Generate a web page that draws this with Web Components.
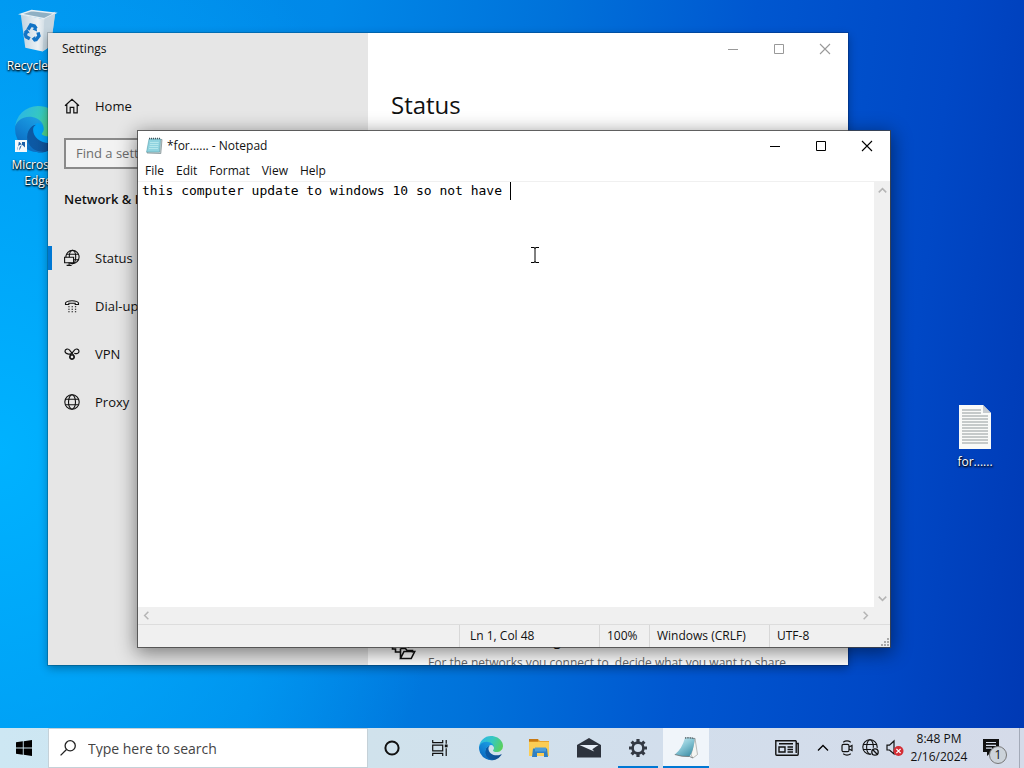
<!DOCTYPE html>
<html lang="en">
<head>
<meta charset="utf-8">
<title>Desktop</title>
<style>
  html, body{ margin:0; height:100%; overflow:hidden }
  body{
    --accent:#0078d4;
    font:12px/16px "Open Sans","Noto Sans",sans-serif;
    color:#111;
  }
</style>
</head>
<body>
<win-desktop></win-desktop>

<script>
const ICONS = {
  home: `<svg viewBox="0 0 16 16" fill="none" stroke="currentColor" stroke-width="1.2"><path d="M1 7.8 8 1.2l7 6.6M2.8 6.4v8.4h3.4V9.3h3.6v5.5h3.4V6.4"/></svg>`,
  status: `<svg viewBox="0 0 16 16" fill="none" stroke="currentColor" stroke-width="1.1"><circle cx="8.500" cy="7" r="6.600"/><ellipse cx="8.500" cy="7" rx="3.200" ry="6.600"/><path d="M2.600 4.300h11.800M2.600 9.700h11.800"/><path d="M.6 7.300h9v5.400h-9z" fill="#e6e6e6"/><path d="M5.100 12.700v2.500M2.600 15.400h5"/></svg>`,
  dialup: `<svg viewBox="0 0 16 16" fill="none" stroke="currentColor" stroke-width="1.1"><path d="M1.500 6.500V5C3 2 13 2 14.500 5v1.500h-3.300V5.200H4.800v1.300z"/><path stroke-dasharray="1.300 2" d="M4.300 8.700h8M4.300 11.200h8M4.300 13.700h8"/></svg>`,
  vpn: `<svg viewBox="0 0 16 16" fill="none" stroke="currentColor" stroke-width="1.200"><path d="M8 7.200C6 9 1 7.800 1 5.200 1 2.800 4.300 2.200 5.800 4.300l4 5.200c1.200 2-.2 3.600-1.800 3.600s-3-1.600-1.800-3.600l4-5.200C11.700 2.200 15 2.800 15 5.200S12.200 8.200 10.300 7.200"/><circle cx="8" cy="11" r="2.100"/></svg>`,
  globe: `<svg viewBox="0 0 16 16" fill="none" stroke="currentColor" stroke-width="1.100"><circle cx="8" cy="8" r="7.200"/><ellipse cx="8" cy="8" rx="3.500" ry="7.200"/><path d="M1.500 5.300h13M1.500 10.700h13"/></svg>`,
  sharing: `<svg viewBox="0 0 24 22" fill="none" stroke="currentColor" stroke-width="1.600"><path d="M1 2v9h3v3h5M6 4h11v6M9 10.500h5l1.500 2H21v2"/><path d="M9 20.500V10.500M9 20.500l3.500-7H23.200l-3.500 7z"/></svg>`,
  minimize: `<svg viewBox="0 0 10 10"><path d="M0 5.500h10" stroke="currentColor"/></svg>`,
  maximize: `<svg viewBox="0 0 10 10"><path d="M.5.5h9v9h-9z" fill="none" stroke="currentColor"/></svg>`,
  close: `<svg viewBox="0 0 10 10"><path d="m0 0 10 10M10 0 0 10" stroke="currentColor" stroke-width="1.100"/></svg>`,
  up: `<svg viewBox="0 0 12 12"><path d="m1 8.500 5-5 5 5" fill="none" stroke="currentColor" stroke-width="var(--stroke,1.300)"/></svg>`,
  down: `<svg viewBox="0 0 12 12"><path d="m1 3.500 5 5 5-5" fill="none" stroke="currentColor" stroke-width="var(--stroke,1.300)"/></svg>`,
  left: `<svg viewBox="0 0 12 12"><path d="m8.500 1-5 5 5 5" fill="none" stroke="currentColor" stroke-width="var(--stroke,1.300)"/></svg>`,
  right: `<svg viewBox="0 0 12 12"><path d="m3.500 1 5 5-5 5" fill="none" stroke="currentColor" stroke-width="var(--stroke,1.300)"/></svg>`,
  start: `<svg viewBox="0 0 16 16" fill="#000"><path d="M0 2.300 6.800 1.300v6.200H0zM7.700 1.200 16 0v7.500H7.700zM0 8.400h6.800v6.300L0 13.700zM7.700 8.400H16V16l-8.300-1.200z"/></svg>`,
  search: `<svg viewBox="0 0 16 16" fill="none" stroke="#222" stroke-width="1.300"><circle cx="10.200" cy="5.800" r="5.100"/><path d="M6.500 9.500.6 15.400"/></svg>`,
  cortana: `<svg viewBox="0 0 16 16"><circle cx="8" cy="8" r="6.600" fill="none" stroke="#111" stroke-width="2"/></svg>`,
  taskview: `<svg viewBox="0 0 16 16" fill="none" stroke="#111" stroke-width="1.200"><path d="M.7 0v2.600h10V0M.7 16v-2.600h10V16M.7 5.200h10v5.600H.7zM14.200 0v3.800M14.200 8.200V16"/><path d="M12.800 4.500h2.800v2.800h-2.800z" fill="#111" stroke="none"/></svg>`,
  edge: `<svg viewBox="0 0 256 256">
    <defs>
      <linearGradient id="e1" x1=".2" x2="1" y1=".6" y2=".6"><stop stop-color="#0c59a4"/><stop offset="1" stop-color="#114a8b"/></linearGradient>
      <linearGradient id="e2" x1=".7" x2=".2" y1=".1" y2="1"><stop stop-color="#1b9de2"/><stop offset=".5" stop-color="#1181d2"/><stop offset="1" stop-color="#0a62b8"/></linearGradient>
      <linearGradient id="e3" x1="0" x2="1" y1=".3" y2=".6"><stop stop-color="#2bb5e8"/><stop offset=".5" stop-color="#36c8c0"/><stop offset="1" stop-color="#5bd05a"/></linearGradient>
    </defs>
    <path fill="url(#e1)" d="M235.680 195.460a93.730 93.730 0 0 1-10.540 4.710 101.870 101.870 0 0 1-35.900 6.460c-47.320 0-88.540-32.550-88.540-74.320a31.480 31.480 0 0 1 16.430-27.310c-42.800 1.800-53.800 46.400-53.800 72.530 0 73.880 68.090 81.370 82.760 81.370 7.910 0 19.840-2.300 27-4.560l1.310-.44a128.340 128.340 0 0 0 66.600-52.800 4 4 0 0 0-5.320-5.640z"/>
    <path fill="url(#e2)" d="M105.730 241.420a79.200 79.200 0 0 1-22.740-21.340 80.720 80.720 0 0 1 29.530-120c3.120-1.470 8.450-4.130 15.540-4a32.350 32.350 0 0 1 25.690 13 31.880 31.880 0 0 1 6.360 18.660c0-.21 24.460-79.600-80-79.600-43.900 0-80 41.660-80 78.210a130.150 130.150 0 0 0 12.110 56 128 128 0 0 0 156.380 67.110 75.550 75.550 0 0 1-62.780-8z"/>
    <path fill="url(#e3)" d="M152.330 148.860c-.81 1.050-3.300 2.500-3.300 5.660 0 2.610 1.700 5.120 4.720 7.230 14.380 10 41.490 8.680 41.560 8.680a59.560 59.560 0 0 0 30.270-8.350 61.380 61.380 0 0 0 30.430-52.880c.26-22.410-8-37.310-11.340-43.910C223.460 23.840 177.720 0 128 0A128 128 0 0 0 0 126.200c.48-36.540 36.800-66.050 80-66.050 3.500 0 23.460.34 42 10.070 16.340 8.580 24.900 18.940 30.850 29.210 6.180 10.670 7.280 24.150 7.280 29.520s-2.740 13.330-7.800 19.910z"/>
  </svg>`,
  explorer: `<svg viewBox="0 0 24 24"><path d="M1 3h9l2 2h9v15H1z" fill="#e8a52e"/><path d="M1 6h20v14H1z" fill="#fbcd55"/><path d="M1 3h9v2.500H1z" fill="#c77813"/><path d="M5 12.500h14l1 8.500h-4v-4H9v4H4z" fill="#2f80c3"/><path d="M7 11.500h11v4H7z" fill="#4b9dd8"/></svg>`,
  mail: `<svg viewBox="0 0 24 20"><path d="M0 7 12 0l12 7v12.500H0z" fill="#2d333d"/><path d="M2.500 7h19l-6.200 4.200 2 2.200-5.300-2.100z" fill="#e5edf6"/></svg>`,
  settings: `<svg viewBox="0 0 20 20" fill="none" stroke="#333943"><circle cx="10" cy="10" r="5.400" stroke-width="2.600"/><path stroke-width="3.200" d="M10 1v3.200M10 15.800V19M1 10h3.200M15.800 10H19M3.600 3.600l2.300 2.300M14.100 14.100l2.300 2.300M16.400 3.600l-2.300 2.300M5.900 14.100l-2.300 2.300"/></svg>`,
  notepad: `<svg viewBox="0 0 24 24"><defs><linearGradient id="n" x2=".7" y2="1"><stop stop-color="#d5f0f5"/><stop offset=".5" stop-color="#8cc9d8"/><stop offset="1" stop-color="#4393aa"/></linearGradient></defs><path d="m21 2.500 2.500 16-4.500 3.500-2-3z" fill="#f4f5f2" stroke="#8d8f8c" stroke-width=".6"/><path d="M11 1.800q5-.6 9.500.7Q20 14 15.500 20.500 8 21 .8 18.500 8 13 11 1.800z" fill="url(#n)"/><path d="M.8 18.500Q8 21 15.500 20.500L19 22" stroke="#6b6f70" stroke-width=".8" fill="none"/><path d="M11 2q5-.6 10 .7" stroke="#4c565a" stroke-width="1.400" stroke-dasharray="1 .7" fill="none"/></svg>`,
  notefile: `<svg viewBox="0 0 16 17"><path d="m4 2 12 .5-1.200 14L1 16z" fill="#cbd0cf" stroke="#73878d" stroke-width=".7"/><path d="M3 2h11.500l-1 13H.6z" fill="#8fd3df" stroke="#5fa6b4" stroke-width=".6"/><path d="M4 5.500h8.700M3.800 7.500h8.700M3.500 9.500h8.700M3 11.500h9" stroke="#c4eff2" stroke-width=".7"/><path d="M3 1.500h12" stroke="#3e565d" stroke-width="1.500" stroke-dasharray="1 1"/></svg>`,
  news: `<svg viewBox="0 0 24 16" fill="none" stroke="#111" stroke-width="1.400"><path d="M21.200.8H.8v13.500q0 .9.900.9h20.600q.9 0 .9-.9V3.500h-2v9.500M21.200.8V4"/><path d="M4 7h6v5H4zM4 3.800h14M12.500 7H18M12.500 9.500H18M12.500 12H18"/></svg>`,
  meet: `<svg viewBox="0 0 14 18" fill="none" stroke="#111" stroke-width="1.200"><rect x="2" y="5.300" width="7" height="7.400" rx="1.500"/><path d="m9 8 3-1.600v5.200L9 10M3.200 3.200Q7 .6 10.800 3.200M3.200 14.800Q7 17.400 10.800 14.800"/></svg>`,
  offline: `<svg viewBox="0 0 18 18" fill="none" stroke="#111" stroke-width="1.100"><circle cx="8" cy="8" r="7.200"/><ellipse cx="8" cy="8" rx="3.400" ry="7.200"/><path d="M1 5.500h14M1 10.500h14"/><circle cx="13" cy="13" r="4.600" fill="#d4dcea" stroke="none"/><circle cx="13" cy="13" r="3.200" stroke-width="1.300"/><path d="m10.800 10.800 4.400 4.400" stroke-width="1.300"/></svg>`,
  muted: `<svg viewBox="0 0 18 18"><path d="M1 6.200h2.500L8 2v13l-4.500-4H1z" fill="none" stroke="#111" stroke-width="1.200"/><circle cx="12.500" cy="12" r="5" fill="#d42d35"/><path d="m10.400 9.900 4.200 4.200M14.600 9.900l-4.200 4.200" stroke="#fff" stroke-width="1.300"/></svg>`,
  notice: `<svg viewBox="0 0 18 18"><path d="M1 0h16v13H9.500L5 17v-4H1z" fill="#111"/><path d="M4 3.500h10M4 6.300h10M4 9.100h6" stroke="#d4dcea" stroke-width="1.200"/></svg>`,
  recycle: `<svg viewBox="0 0 44 48"><defs><linearGradient id="r" x2="1"><stop stop-color="#bdd2e0"/><stop offset=".5" stop-color="#edf1f4"/><stop offset="1" stop-color="#a7bfce"/></linearGradient></defs><path d="m3 6 23 5 15-8-5 38-9 6L8 43z" fill="url(#r)"/><path d="M3 6 15 2l26 3-12 6z" fill="#8fb0c4" stroke="#e7eff4" stroke-width="1.500"/><path d="m29 11 12-6-5 36-9 6z" fill="#c5d4de"/><g fill="none" stroke="#1374c6" stroke-width="3.800"><path d="m11 23 3-5 4 1 2 3M22 26l1 4-3 4h-3M13 33l-4-2-1-3 2-3"/></g><path d="m20 19 1 6-5-2zM19 30v7l-4-4zM6 26l4-4 3 5z" fill="#1374c6"/></svg>`,
  textfile: `<svg viewBox="0 0 32 44"><path d="M0 0h24l8 8v36H0z" fill="#f9faf8"/><path d="M24 0v8h8z" fill="#c7ccd0"/><path d="M3 5h19M3 8h19M3 11h26M3 14h26M3 17h26M3 20h26M3 23h26M3 26h26M3 29h26M3 32h26M3 35h26M3 38h26" stroke="#929a9b"/></svg>`,
  shortcut: `<svg viewBox="0 0 12 12"><path d="M0 0h12v12H0z" fill="#f5f8fb"/><path d="M2.500 10.500C2 6.500 4 4.500 7 4.500V2H3.800M7 4.500 4.500 2H10v5.500L7.500 5C5 5.500 4 7.500 4.500 10.500z" fill="#1c5fa8"/></svg>`,
  ibeam: `<svg viewBox="0 0 8 16"><path d="M0 .5h3q1 0 1 1 0-1 1-1h3M4 1v14M0 15.500h3q1 0 1-1 0 1 1 1h3" fill="none" stroke="#000"/></svg>`,
  grip: `<svg viewBox="0 0 9 9" fill="#aaa"><path d="M6 0h2v2H6zM3 3h2v2H3zM6 3h2v2H6zM0 6h2v2H0zM3 6h2v2H3zM6 6h2v2H6z"/></svg>`
};

/** <win-icon name="..."> : sized by its user, coloured by currentColor */
class WinIcon extends HTMLElement{
  constructor(){
    super();
    this.attachShadow({mode:'open'});
  }
  connectedCallback(){
    this.setAttribute('aria-hidden', 'true');
    this.shadowRoot.innerHTML = `
      <style>
        :host{ display:block; flex:none; width:16px; height:16px }
        svg{ display:block; width:100%; height:100%; overflow:visible }
      </style>
      ${ICONS[this.getAttribute('name')] || ''}
    `;
  }
}
customElements.define('win-icon', WinIcon);

class DesktopIcon extends HTMLElement{
  constructor(){
    super();
    this.attachShadow({mode:'open'});
    this.shadowRoot.innerHTML = `
      <style>
        :host{ display:block; width:76px }
        a{
          display:flex; flex-direction:column; align-items:center; gap:5px;
          color:#fff; text-align:center; text-decoration:none;
          text-shadow:0 1px 2px #000, 1px 1px 2px #000;
        }
      </style>
      <a href="#"><slot name="icon"></slot><span><slot></slot></span></a>
    `;
  }
}
customElements.define('desktop-icon', DesktopIcon);

class AppWindow extends HTMLElement{
  constructor(){
    super();
    this.attachShadow({mode:'open'});
    this.shadowRoot.innerHTML = `
      <style>
        :host{
          display:flex; flex-direction:column; overflow:hidden;
          background:var(--window-bg,#fff);
        }
        header{
          display:flex; align-items:center; flex:none;
          height:var(--title-height,32px); padding-left:var(--title-pad,14px);
        }
        .title{ display:flex; align-items:center; gap:5px; flex:1 }
        .buttons{ display:flex; align-self:stretch; color:var(--button-color,#000) }
        button{
          display:flex; align-items:center; justify-content:center;
          width:46px; padding:0; border:0; background:none; color:inherit;
        }
        button win-icon{ width:10px; height:10px }
        .body{ display:flex; flex:1; min-height:0 }
        ::slotted(*){ flex:1; min-width:0 }
        ::slotted(win-icon){ flex:none }
      </style>
      <header>
        <div class="title"><slot name="icon"></slot><span class="text"></span></div>
        <div class="buttons">
          <button aria-label="Minimize"><win-icon name="minimize"></win-icon></button>
          <button aria-label="Maximize"><win-icon name="maximize"></win-icon></button>
          <button aria-label="Close"><win-icon name="close"></win-icon></button>
        </div>
      </header>
      <div class="body"><slot></slot></div>
    `;
  }
  connectedCallback(){
    this.shadowRoot.querySelector('.text').textContent = this.getAttribute('caption') || '';
  }
}
customElements.define('app-window', AppWindow);

class NavItem extends HTMLElement{
  constructor(){
    super();
    this.attachShadow({mode:'open'});
  }
  connectedCallback(){
    this.shadowRoot.innerHTML = `
      <style>
        :host{ display:block; font-size:13px }
        a{
          display:flex; align-items:center; gap:15px; height:var(--row,48px);
          padding-left:16px; color:#111; text-decoration:none; position:relative;
        }
        :host([selected]) a::before{
          content:""; position:absolute; left:0; top:12px; bottom:12px;
          width:4px; background:var(--accent);
        }
      </style>
      <a href="#"><win-icon name="${this.getAttribute('icon')}"></win-icon><slot></slot></a>
    `;
  }
}
customElements.define('nav-item', NavItem);

class SettingsView extends HTMLElement{
  constructor(){
    super();
    this.attachShadow({mode:'open'});
    this.shadowRoot.innerHTML = `
      <style>
        :host{ display:grid; grid-template-columns:320px 1fr; font-size:13px; min-height:0 }
        aside{ padding-top:21px }
        .home{ --row:40px }
        input{
          display:block; box-sizing:border-box; width:288px; height:31px;
          margin:12px 16px 0; padding:0 10px 2px; border:2px solid #8a8a8a;
          background:#f2f2f2; font:inherit; color:#111;
        }
        input::placeholder{ color:#6c6c6c; opacity:1 }
        h2{
          margin:0 0 5px 16px; font-size:13px; font-weight:600; line-height:60px;
        }
        main{
          display:flex; flex-direction:column; justify-content:space-between;
          padding-left:23px; overflow:hidden;
        }
        h1{ margin:20px 0 0; font-size:24px; font-weight:400; line-height:40px }
        .link{
          display:flex; gap:12px; height:34px; overflow:hidden;
          color:#111; text-decoration:none; line-height:20px;
        }
        .link win-icon{ width:25px; height:22px; margin-top:7px }
        strong{ display:block; font-weight:600 }
        small{ display:block; font-size:12px; color:#666; line-height:24px; white-space:nowrap }
      </style>
      <aside>
        <nav-item class="home" icon="home">Home</nav-item>
        <input type="search" placeholder="Find a setting" aria-label="Find a setting">
        <h2>Network &amp; Internet</h2>
        <nav>
          <nav-item icon="status" selected>Status</nav-item>
          <nav-item icon="dialup">Dial-up</nav-item>
          <nav-item icon="vpn">VPN</nav-item>
          <nav-item icon="globe">Proxy</nav-item>
        </nav>
      </aside>
      <main>
        <h1>Status</h1>
        <a class="link" href="#">
          <win-icon name="sharing"></win-icon>
          <span>
            <strong>Network and Sharing Center</strong>
            <small>For the networks you connect to, decide what you want to share.</small>
          </span>
        </a>
      </main>
    `;
  }
}
customElements.define('settings-view', SettingsView);

class NotepadView extends HTMLElement{
  constructor(){
    super();
    this.attachShadow({mode:'open'});
    this.shadowRoot.innerHTML = `
      <style>
        :host{ display:flex; flex-direction:column }
        .menu{ display:flex; height:21px; flex:none; padding-left:1px; border-bottom:1px solid #f0f0f0 }
        .menu button{
          padding:0 6px; border:0; background:none; color:inherit; font:inherit;
        }
        .edit{
          display:grid; flex:1; min-height:0;
          grid-template:1fr 17px / 1fr 16px;
        }
        .page{
          position:relative; display:flex;
          font:13px/18px "DejaVu Sans Mono","Liberation Mono",monospace;
        }
        textarea{
          flex:1; padding:0 4px; border:0; outline:0; resize:none; overflow:hidden;
          background:#fff; color:#000; font:inherit; white-space:pre;
        }
        .caret{
          position:absolute; left:calc(4px + 47ch); top:0; width:1px; height:18px; background:#000;
        }
        .bar{
          display:flex; justify-content:space-between; align-items:center;
          background:#f0f0f0; color:#b5b5b5; --stroke:2;
        }
        .bar win-icon{ width:9px; height:9px }
        .v{ flex-direction:column; padding:4px 0; grid-row:1; grid-column:2 }
        .h{ padding:0 4px }
        .corner{ background:#f0f0f0 }
        footer{
          display:flex; flex:none; height:22px; line-height:22px; position:relative;
          background:#f0f0f0; border-top:1px solid #ddd;
        }
        footer span{ box-sizing:border-box; border-left:1px solid #d8d8d8; padding-left:7px }
        .gap{ flex:1 }
        .pos{ width:140px }
        footer .pos{ padding-left:10px }
        .zoom{ width:50px }
        .eol{ width:120px }
        .enc{ width:121px }
        .grip{ position:absolute; right:0; bottom:0; width:9px; height:9px }
      </style>
      <div class="menu" role="menubar">
        <button>File</button><button>Edit</button><button>Format</button><button>View</button><button>Help</button>
      </div>
      <div class="edit">
        <div class="page">
          <textarea aria-label="Text editor" spellcheck="false">this computer update to windows 10 so not have </textarea>
          <i class="caret"></i>
        </div>
        <div class="bar v"><win-icon name="up"></win-icon><win-icon name="down"></win-icon></div>
        <div class="bar h"><win-icon name="left"></win-icon><win-icon name="right"></win-icon></div>
        <div class="corner"></div>
      </div>
      <footer>
        <div class="gap"></div>
        <span class="pos">Ln 1, Col 48</span>
        <span class="zoom">100%</span>
        <span class="eol">Windows (CRLF)</span>
        <span class="enc">UTF-8</span>
        <win-icon class="grip" name="grip"></win-icon>
      </footer>
    `;
  }
}
customElements.define('notepad-view', NotepadView);

class TaskButton extends HTMLElement{
  constructor(){
    super();
    this.attachShadow({mode:'open'});
  }
  connectedCallback(){
    this.shadowRoot.innerHTML = `
      <style>
        :host{ display:flex; width:48px }
        button{
          display:flex; flex:1; align-items:center; justify-content:center;
          padding:0; border:0; background:none; position:relative;
        }
        win-icon{ width:var(--w,16px); height:var(--h,16px) }
        :host([running]) button::after{
          content:""; position:absolute; left:4px; right:4px; bottom:0;
          height:2px; background:var(--accent);
        }
        :host([active]) button{ background:#f0f5fa }
        :host([active]) button::after{ left:0; right:0 }
      </style>
      <button aria-label="${this.getAttribute('label')}"><win-icon name="${this.getAttribute('icon')}"></win-icon></button>
    `;
  }
}
customElements.define('task-button', TaskButton);

class TaskBar extends HTMLElement{
  constructor(){
    super();
    this.attachShadow({mode:'open'});
    this.shadowRoot.innerHTML = `
      <style>
        :host{
          display:flex; height:40px; flex:none;
          background:linear-gradient(90deg,#cde7f3,#d0e2ec 36%,#d2deec 65%,#d5dbe9);
        }
        .search{
          display:flex; align-items:center; gap:12px; box-sizing:border-box;
          width:320px; padding-left:11px; background:#fff; border:1px solid #c5d1d8;
        }
        input{
          flex:1; min-width:0; padding:2px 0 0; border:0; outline:0; background:none; font:inherit; font-size:14px;
        }
        input::placeholder{ color:#444; opacity:1 }
        .apps{ display:flex; gap:1px; margin-left:3px }
        .big{ --w:24px; --h:24px }
        .mail{ --w:24px; --h:20px }
        .gear{ --w:20px; --h:20px }
        .current{ width:46px }
        .tray{ display:flex; margin-left:auto }
        .news{ --w:24px; --h:16px }
        .small{ width:24px }
        .chev{ --w:12px; --h:12px }
        .meet{ --w:14px; --h:18px }
        .net{ --w:18px; --h:18px }
        .clock{
          width:64px; padding:0; border:0; background:none; color:#111;
          font:inherit; line-height:18px; text-align:center;
        }
        .wrap{ position:relative; display:flex }
        .notice{ width:40px; --w:18px; --h:18px; margin-right:8px }
        .badge{
          position:absolute; right:12px; bottom:4px; box-sizing:border-box;
          width:18px; height:18px; border:1px solid #777; border-radius:9px;
          background:#ccd3da; line-height:16px; text-align:center;
        }
        .show{ width:5px; padding:0; border:0; border-left:1px solid #a3aab8; background:none }
      </style>
      <task-button icon="start" label="Start"></task-button>
      <label class="search">
        <win-icon name="search"></win-icon>
        <input type="search" placeholder="Type here to search" aria-label="Type here to search">
      </label>
      <task-button icon="cortana" label="Cortana"></task-button>
      <task-button icon="taskview" label="Task View"></task-button>
      <div class="apps">
        <task-button class="big" icon="edge" label="Microsoft Edge"></task-button>
        <task-button class="big" icon="explorer" label="File Explorer"></task-button>
        <task-button class="mail" icon="mail" label="Mail"></task-button>
        <task-button class="gear" icon="settings" label="Settings" running></task-button>
        <task-button class="big current" icon="notepad" label="Notepad" running active></task-button>
      </div>
      <div class="tray">
        <task-button class="news" icon="news" label="News"></task-button>
        <task-button class="small chev" icon="up" label="Show hidden icons"></task-button>
        <task-button class="small meet" icon="meet" label="Meet Now"></task-button>
        <task-button class="small net" icon="offline" label="Network"></task-button>
        <task-button class="small net" icon="muted" label="Volume"></task-button>
        <button class="clock">8:48 PM<br>2/16/2024</button>
        <div class="wrap">
          <task-button class="notice" icon="notice" label="Notifications"></task-button>
          <span class="badge">1</span>
        </div>
        <button class="show" aria-label="Show desktop"></button>
      </div>
    `;
  }
}
customElements.define('task-bar', TaskBar);

class WinDesktop extends HTMLElement{
  constructor(){
    super();
    this.attachShadow({mode:'open'});
    this.shadowRoot.innerHTML = `
      <style>
        :host{ display:flex; flex-direction:column; height:100vh }
        .desk{
          position:relative; flex:1; min-height:0;
          background:
            radial-gradient(ellipse 45% 80% at 0 62%, #00b2ff, #00b2ff00),
            linear-gradient(97deg,#0093ee 0,#0088e8 30%,#0072da 50%,#0057d0 68%,#0048c6 86%,#0039b4);
        }
        desktop-icon, app-window, .pointer{ position:absolute }
        .bin{ left:0; top:8px }
        .edge{ left:0; top:106px }
        .file{ right:11px; top:405px }
        .bin win-icon{ width:40px; height:45px }
        .edge win-icon{ width:46px; height:46px }
        .file win-icon{ width:32px; height:44px }
        .pic{ position:relative; display:block }
        .pic .shortcut{ position:absolute; left:0; bottom:0; width:12px; height:12px }
        .settings{
          left:48px; right:176px; top:33px; bottom:63px;
          --window-bg:linear-gradient(90deg,#e6e6e6 320px,#fff 320px);
          --button-color:#999;
          box-shadow:0 0 0 1px #0000002e, 0 3px 9px #0005;
        }
        .notepad{
          left:138px; right:134px; top:131px; bottom:81px;
          --title-height:29px; --title-pad:8px;
          box-shadow:0 0 0 1px #444c, 0 4px 18px 2px #0007;
        }
        .notepad > win-icon{ height:17px }
        .pointer{ left:531px; top:247px; width:8px; height:16px }
      </style>
      <div class="desk">
        <desktop-icon class="bin"><win-icon slot="icon" name="recycle"></win-icon>Recycle Bin</desktop-icon>
        <desktop-icon class="edge">
          <span slot="icon" class="pic"><win-icon name="edge"></win-icon><win-icon class="shortcut" name="shortcut"></win-icon></span>Microsoft Edge
        </desktop-icon>
        <desktop-icon class="file"><win-icon slot="icon" name="textfile"></win-icon>for......</desktop-icon>
        <app-window class="settings" caption="Settings"><settings-view></settings-view></app-window>
        <app-window class="notepad" caption="*for...... - Notepad">
          <win-icon slot="icon" name="notefile"></win-icon>
          <notepad-view></notepad-view>
        </app-window>
        <win-icon class="pointer" name="ibeam"></win-icon>
      </div>
      <task-bar></task-bar>
    `;
  }
}
customElements.define('win-desktop', WinDesktop);
</script>
</body>
</html>
